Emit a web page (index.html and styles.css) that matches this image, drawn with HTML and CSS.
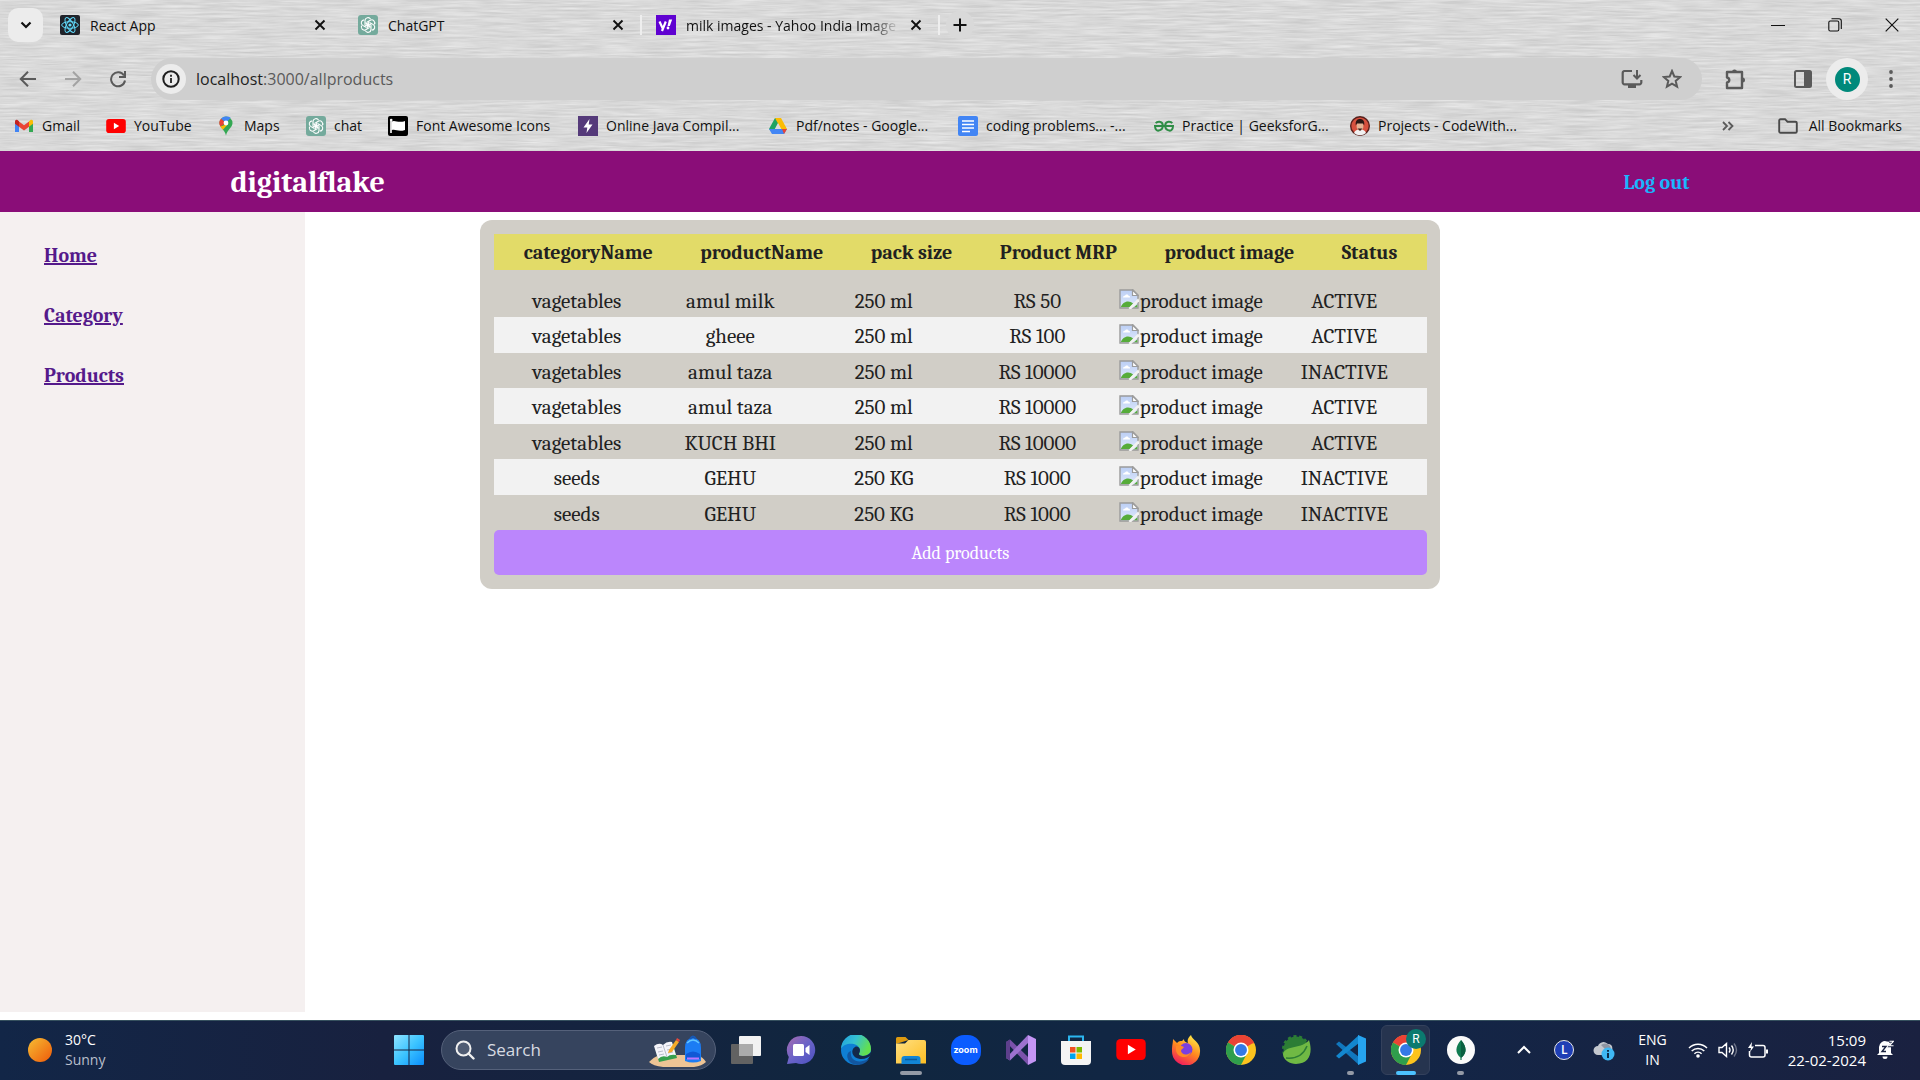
FILE: index.html
```html
<!DOCTYPE html>
<html lang="en">
<head>
<meta charset="utf-8">
<title>React App</title>
<link rel="stylesheet" href="styles.css">
</head>
<body>
<svg width="0" height="0" class="defs" aria-hidden="true">
  <defs>
    <linearGradient id="gWin" x1="0" y1="0" x2="1" y2="1"><stop offset="0" stop-color="#8fe3ff"/><stop offset=".5" stop-color="#3cc4ff"/><stop offset="1" stop-color="#0a8dfc"/></linearGradient>
    <linearGradient id="gSun" x1="0" y1="0" x2="1" y2="1"><stop offset="0" stop-color="#f5bd33"/><stop offset="1" stop-color="#ef5a0a"/></linearGradient>
    <linearGradient id="gSky" x1="0" y1="0" x2="0" y2="1"><stop offset="0" stop-color="#bccff5"/><stop offset="1" stop-color="#dfe9fb"/></linearGradient>
    <linearGradient id="gFolder" x1="0" y1="0" x2="1" y2="1"><stop offset="0" stop-color="#ffe082"/><stop offset="1" stop-color="#fdbd22"/></linearGradient>
    <linearGradient id="gChat" x1="0" y1="0" x2="1" y2="1"><stop offset="0" stop-color="#a86bb0"/><stop offset=".5" stop-color="#6a63c8"/><stop offset="1" stop-color="#4a50c0"/></linearGradient>
    <linearGradient id="gFox" x1=".8" y1="0" x2=".3" y2="1"><stop offset="0" stop-color="#fff04a"/><stop offset=".5" stop-color="#ff8a1e"/><stop offset="1" stop-color="#f0185f"/></linearGradient>
    <linearGradient id="gEdge" x1="0" y1="0" x2="1" y2=".4"><stop offset="0" stop-color="#1e9de0"/><stop offset=".5" stop-color="#35c1d2"/><stop offset="1" stop-color="#62e04f"/></linearGradient>
    <symbol id="gpt" viewBox="0 0 20 20"><rect width="20" height="20" rx="3" fill="#74aa9c"/><g fill="none" stroke="#fff" stroke-width="1.1"><g id="petal"><path d="M7 10V5.6a3 3 0 0 1 5.6-1.4M9 11.4l4.4-2.6"/></g><use href="#petal" transform="rotate(60 10 10)"/><use href="#petal" transform="rotate(120 10 10)"/><use href="#petal" transform="rotate(180 10 10)"/><use href="#petal" transform="rotate(240 10 10)"/><use href="#petal" transform="rotate(300 10 10)"/></g></symbol>
    <symbol id="x" viewBox="0 0 12 12"><path d="M1.5 1.5l9 9M10.500 1.5l-9 9" stroke="#111" stroke-width="1.9" fill="none"/></symbol>
    <symbol id="yt" viewBox="0 0 28 20"><rect width="28" height="20" rx="4" fill="#f00"/><path d="M11 5.500v9l7.500-4.500z" fill="#fff"/></symbol>
    <symbol id="chrome" viewBox="0 0 48 48"><circle cx="24" cy="24" r="24" fill="#fcc31e"/><path d="M24 24L3.200 12A24 24 0 0 1 44.800 12z" fill="#ea4335"/><path d="M24 13h20.800a24 24 0 0 0-41.600-1z" fill="#ea4335"/><path d="M3.200 12A24 24 0 0 0 24 48l9.500-18.500L24 24z" fill="#2f9e4c"/><circle cx="24" cy="24" r="12" fill="#fff"/><circle cx="24" cy="24" r="9.500" fill="#3479e6"/></symbol>
    <symbol id="broken" viewBox="0 0 20 20"><path d="M1 1h13l5 5v13H1z" fill="url(#gSky)"/><path d="M4 8.500c0-1.600 1.500-2 2-1.700.7-2 3.200-1.600 3.500 0 1-.2 1.700.7 1.500 1.700z" fill="#fff"/><path d="M1.800 18.300c1.500-5.500 8-8 12.500-3.500l-3.500 3.500z" fill="#56ac3a"/><path d="M1 1h13l5 5v13H1z" fill="none" stroke="#9b9b9b" stroke-width="1.400"/><path d="M13.500 1v5.500H19z" fill="#fff" stroke="#9b9b9b" stroke-width="1.200"/><path d="M10.500 20L20 10.500" stroke="#f2f2f2" stroke-width="2.600"/><path d="M15 18.300l3.300-3v3z" fill="#56ac3a"/></symbol>
  </defs>
</svg>

<header class="browser">
  <svg class="brushed" aria-hidden="true" width="100%" height="100%">
    <filter id="metal" x="0" y="0" width="100%" height="100%" color-interpolation-filters="sRGB"><feTurbulence type="fractalNoise" baseFrequency="0.025 0.5" numOctaves="3" seed="4"/><feColorMatrix values="0.16 0 0 0 0.77  0.16 0 0 0 0.77  0.16 0 0 0 0.77  0 0 0 0 1"/></filter>
    <rect width="100%" height="100%" filter="url(#metal)"/>
  </svg>
  <div class="tabstrip">
    <button class="tab-search" aria-label="Search tabs"><svg width="12" height="8" viewBox="0 0 12 8"><path d="M1.500 1.500L6 6l4.500-4.500" fill="none" stroke="#111" stroke-width="2.200"/></svg></button>
    <div class="tab">
      <svg width="20" height="20" viewBox="0 0 20 20"><rect width="20" height="20" rx="2" fill="#20232a"/><g fill="none" stroke="#61dafb" stroke-width="1"><ellipse cx="10" cy="10" rx="8.300" ry="3.300"/><ellipse cx="10" cy="10" rx="8.300" ry="3.300" transform="rotate(60 10 10)"/><ellipse cx="10" cy="10" rx="8.300" ry="3.300" transform="rotate(120 10 10)"/></g><circle cx="10" cy="10" r="1.600" fill="#61dafb"/></svg>
      <span class="tab-title">React App</span>
      <button aria-label="Close React App"><svg width="12" height="12"><use href="#x"/></svg></button>
    </div>
    <div class="tab ruled">
      <svg width="20" height="20"><use href="#gpt"/></svg>
      <span class="tab-title">ChatGPT</span>
      <button aria-label="Close ChatGPT"><svg width="12" height="12"><use href="#x"/></svg></button>
    </div>
    <div class="tab ruled">
      <svg width="20" height="20" viewBox="0 0 20 20"><rect width="20" height="20" fill="#5f01d1"/><path d="M3.500 6.500l3 6.500M9.800 6.500L6 16" stroke="#fff" stroke-width="2.200" fill="none"/><path d="M13 4.500h3.200L13.800 11h-2.300z" fill="#fff"/><circle cx="12" cy="13" r="1.400" fill="#fff"/></svg>
      <span class="tab-title faded">milk images - Yahoo India Image</span>
      <button aria-label="Close milk images"><svg width="12" height="12"><use href="#x"/></svg></button>
    </div>
    <button class="new-tab" aria-label="New tab"><svg width="14" height="14" viewBox="0 0 14 14"><path d="M7 0.500v13M.5 7h13" stroke="#111" stroke-width="2"/></svg></button>
    <div class="window-controls">
      <button aria-label="Minimize"><svg width="14" height="14" viewBox="0 0 14 14"><path d="M0 7.500h14" stroke="#111"/></svg></button>
      <button aria-label="Restore"><svg width="14" height="14" viewBox="0 0 14 14"><g fill="none" stroke="#111" stroke-width="1.100"><rect x=".8" y="3" width="10" height="10" rx="1.500"/><path d="M3.500 .8h7.500a2.300 2.300 0 0 1 2.300 2.300v8"/></g></svg></button>
      <button aria-label="Close"><svg width="14" height="14" viewBox="0 0 14 14"><path d="M.7 .7l12.600 12.600M13.300 .7L.7 13.300" stroke="#111" stroke-width="1.200"/></svg></button>
    </div>
  </div>

  <div class="toolbar">
    <div class="nav-buttons">
      <button aria-label="Back"><svg width="18" height="18" viewBox="0 0 18 18"><path d="M17 9H2.500M9 1.800L1.800 9 9 16.200" fill="none" stroke="#5a5a5a" stroke-width="2"/></svg></button>
      <button aria-label="Forward"><svg width="18" height="18" viewBox="0 0 18 18"><path d="M1 9h14.500M9 1.800L16.200 9 9 16.200" fill="none" stroke="#a3a3a3" stroke-width="2"/></svg></button>
      <button aria-label="Reload"><svg width="18" height="18" viewBox="0 0 18 18"><path d="M15 5.500A7 7 0 1 0 16 10.500" fill="none" stroke="#5a5a5a" stroke-width="2"/><path d="M17 1v7h-7V6h5V1z" fill="#5a5a5a"/></svg></button>
    </div>
    <div class="omnibox">
      <button class="site-info" aria-label="View site information"><svg width="18" height="18" viewBox="0 0 18 18"><circle cx="9" cy="9" r="7.700" fill="none" stroke="#1f1f1f" stroke-width="2"/><path d="M9 8v5M9 4.800v1.900" stroke="#1f1f1f" stroke-width="1.800"/></svg></button>
      <span class="url" role="textbox"><b>localhost</b>:3000/allproducts</span>
      <button aria-label="Install app"><svg width="22" height="20" viewBox="0 0 22 20"><path d="M11 2H3.500A2 2 0 0 0 1.700 4v9.500a1.800 1.800 0 0 0 1.800 1.800h15a1.800 1.800 0 0 0 1.800-1.800V11" fill="none" stroke="#5a5a5a" stroke-width="2.200"/><path d="M7 15h8v4H7z" fill="#5a5a5a"/><path d="M16 1v8M12.500 6l3.500 3.500L19.500 6" fill="none" stroke="#5a5a5a" stroke-width="2"/></svg></button>
      <button aria-label="Bookmark this page"><svg width="20" height="20" viewBox="0 0 20 20"><path d="M10 2l2.300 5.500 6 .5-4.600 3.900 1.400 5.800L10 14.600l-5.100 3.100 1.400-5.800L1.700 8l6-.5z" fill="none" stroke="#5a5a5a" stroke-width="2"/></svg></button>
    </div>
    <div class="tools">
      <button aria-label="Extensions"><svg width="22" height="22" viewBox="0 0 22 22"><path d="M3 4h15v16H3v-5.500c3-.5 3-4.500 0-5z" fill="none" stroke="#5a5a5a" stroke-width="2.400" stroke-linejoin="round"/><path d="M8 4a2.500 2.500 0 0 1 5 0zM18.500 9.500a2.500 2.500 0 0 1 0 5z" fill="#5a5a5a"/></svg></button>
      <button aria-label="Side panel"><svg width="18" height="18" viewBox="0 0 18 18"><rect x="1" y="1" width="16" height="16" rx="1.500" fill="none" stroke="#5a5a5a" stroke-width="2"/><path d="M10 1h7v16h-7z" fill="#5a5a5a"/></svg></button>
      <button class="profile" aria-label="Profile"><span>R</span></button>
      <button aria-label="Menu"><svg width="4" height="18" viewBox="0 0 4 18"><g fill="#5a5a5a"><circle cx="2" cy="2" r="1.900"/><circle cx="2" cy="9" r="1.900"/><circle cx="2" cy="16" r="1.900"/></g></svg></button>
    </div>
  </div>

  <nav class="bookmarks" aria-label="Bookmarks">
    <div class="bookmark-list">
      <a href="#"><svg width="20" height="20" viewBox="0 0 20 20"><path d="M1 4.500V16h4V9z" fill="#4285f4"/><path d="M19 4.500V16h-4V9z" fill="#34a853"/><path d="M5 5.500v5.300l5 3.800 5-3.800V5.500l-5 3.800z" fill="#ea4335"/><path d="M1 5.500v2.300l4 3V5.200L3.500 4C2.300 3.100 1 4 1 5.500z" fill="#c5221f"/><path d="M19 5.500v2.300l-4 3V5.200L16.500 4c1.200-.9 2.500 0 2.500 1.500z" fill="#fbbc04"/></svg><span>Gmail</span></a>
      <a href="#"><svg width="20" height="14"><use href="#yt"/></svg><span>YouTube</span></a>
      <a href="#"><svg width="20" height="20" viewBox="0 0 20 20"><path d="M10 .5A6.500 6.500 0 0 0 3.500 7c0 4.500 5 6 6.500 12.500C11.500 13 16.500 11.500 16.500 7A6.500 6.500 0 0 0 10 .5z" fill="#34a853"/><path d="M10 .5A6.500 6.500 0 0 0 5 2.800L10 7l4.700-5.200A6.500 6.500 0 0 0 10 .5z" fill="#4285f4"/><path d="M5 2.800a6.500 6.500 0 0 0-.6 7.700L10 7z" fill="#ea4335"/><path d="M4.400 10.500c.7 1.200 1.600 2.200 2.500 3.200L12 8z" fill="#fbbc04"/><circle cx="10" cy="7" r="2.400" fill="#fff"/></svg><span>Maps</span></a>
      <a href="#"><svg width="20" height="20"><use href="#gpt"/></svg><span>chat</span></a>
      <a href="#"><svg width="20" height="20" viewBox="0 0 20 20"><rect width="20" height="20" rx="2" fill="#000"/><path d="M3 4.500v12.500" stroke="#fff" stroke-width="1.600"/><path d="M3.500 5.500c4-2 6 2 13.500-.5v9c-7 2.500-9.500-1.500-13.500.3z" fill="#fff"/><circle cx="3.200" cy="4" r="1.300" fill="#fff"/></svg><span>Font Awesome Icons</span></a>
      <a href="#"><svg width="20" height="20" viewBox="0 0 20 20"><rect width="20" height="20" fill="#553a7a"/><path d="M11.500 3L5.500 11.500h3.800L8.500 17l6-8.500h-3.800z" fill="#fff"/></svg><span>Online Java Compil...</span></a>
      <a href="#"><svg width="20" height="20" viewBox="0 0 20 20"><path d="M7 2h6l-7.500 15.500L1 13z" fill="#1ea362"/><path d="M7 2h6l6 11h-6z" fill="#fbbc04"/><path d="M1 13h18l-3 5H4z" fill="#4285f4"/><path d="M14 13h5l-3 5z" fill="#ea4335"/><path d="M10 7l3.200 6H6.800z" fill="#dcdcdc"/></svg><span>Pdf/notes - Google...</span></a>
      <a href="#"><svg width="20" height="20" viewBox="0 0 20 20"><rect width="20" height="20" rx="2" fill="#4285f4"/><path d="M4 5h12M4 8.500h12M4 12h12M4 15.500h8" stroke="#fff" stroke-width="1.700"/></svg><span>coding problems... -...</span></a>
      <a href="#"><svg width="20" height="20" viewBox="0 0 20 20"><g fill="none" stroke="#2f8d46" stroke-width="2"><path d="M1.800 7.300C3 5.200 8.300 4.500 8.800 9.200 9 14 4.500 15.500 2.500 14 1 12.800 1 11.500 1 10h18c0 1.500 0 2.800-1.500 4-2 1.500-6.500 0-6.300-4.800C11.700 4.500 17 5.200 18.200 7.300"/></g></svg><span>Practice | GeeksforG...</span></a>
      <a href="#"><svg width="20" height="20" viewBox="0 0 20 20"><circle cx="10" cy="10" r="9.300" fill="#d6503e" stroke="#57201c" stroke-width="1.400"/><path d="M4 17c1-3 3-3.500 6-3.500s5 .5 6 3.500a9 9 0 0 1-12 0z" fill="#f1f1f1"/><ellipse cx="10" cy="10" rx="3.400" ry="4.500" fill="#e5b294"/><path d="M5.800 9.500C5 4 8 3 10 3s5 1 4.200 6.500L13 7.500H7z" fill="#2a1715"/><path d="M7.500 12.500h5L10 15z" fill="#3a2320"/></svg><span>Projects - CodeWith...</span></a>
    </div>
    <button class="more-bookmarks" aria-label="More bookmarks"><svg width="12" height="10" viewBox="0 0 12 10"><path d="M1 1l4 4-4 4M6.500 1l4 4-4 4" fill="none" stroke="#5a5a5a" stroke-width="1.800"/></svg></button>
    <a href="#"><svg width="20" height="20" viewBox="0 0 20 20"><path d="M1.200 4.500a1.300 1.300 0 0 1 1.300-1.300H7l2.500 2.500h8a1.300 1.300 0 0 1 1.300 1.300v8.500a1.300 1.300 0 0 1-1.300 1.300h-15a1.300 1.300 0 0 1-1.300-1.300z" fill="none" stroke="#4a4a4a" stroke-width="1.900"/></svg><span>All Bookmarks</span></a>
  </nav>
</header>

<div class="app">
  <header class="navbar">
    <h1>digitalflake</h1>
    <a href="#">Log out</a>
  </header>
  <div class="content">
    <nav class="sidebar">
      <a href="#">Home</a>
      <a href="#">Category</a>
      <a href="#">Products</a>
    </nav>
    <main>
      <section class="panel">
        <table>
          <thead><tr><th>categoryName</th><th>productName</th><th>pack size</th><th>Product MRP</th><th>product image</th><th>Status</th></tr></thead>
          <tbody>
            <tr><td>vagetables</td><td>amul milk</td><td>250 ml</td><td>RS 50</td><td class="pic"><svg width="20" height="20"><use href="#broken"/></svg>product image</td><td>ACTIVE</td></tr>
            <tr><td>vagetables</td><td>gheee</td><td>250 ml</td><td>RS 100</td><td class="pic"><svg width="20" height="20"><use href="#broken"/></svg>product image</td><td>ACTIVE</td></tr>
            <tr><td>vagetables</td><td>amul taza</td><td>250 ml</td><td>RS 10000</td><td class="pic"><svg width="20" height="20"><use href="#broken"/></svg>product image</td><td>INACTIVE</td></tr>
            <tr><td>vagetables</td><td>amul taza</td><td>250 ml</td><td>RS 10000</td><td class="pic"><svg width="20" height="20"><use href="#broken"/></svg>product image</td><td>ACTIVE</td></tr>
            <tr><td>vagetables</td><td>KUCH BHI</td><td>250 ml</td><td>RS 10000</td><td class="pic"><svg width="20" height="20"><use href="#broken"/></svg>product image</td><td>ACTIVE</td></tr>
            <tr><td>seeds</td><td>GEHU</td><td>250 KG</td><td>RS 1000</td><td class="pic"><svg width="20" height="20"><use href="#broken"/></svg>product image</td><td>INACTIVE</td></tr>
            <tr><td>seeds</td><td>GEHU</td><td>250 KG</td><td>RS 1000</td><td class="pic"><svg width="20" height="20"><use href="#broken"/></svg>product image</td><td>INACTIVE</td></tr>
          </tbody>
        </table>
        <button class="add">Add products</button>
      </section>
    </main>
  </div>
</div>

<footer class="taskbar">
  <div class="weather">
    <svg width="24" height="24" viewBox="0 0 24 24"><circle cx="12" cy="12" r="12" fill="url(#gSun)"/></svg>
    <div><div>30°C</div><div class="dim">Sunny</div></div>
  </div>
  <button class="start" aria-label="Start"><svg width="30" height="30" viewBox="0 0 30 30"><path d="M0 1a1 1 0 0 1 1-1h13.500v14.500H0zM15.500 0H29a1 1 0 0 1 1 1v13.500H15.500zM0 15.500h14.500V30H1a1 1 0 0 1-1-1zM15.500 15.500H30V29a1 1 0 0 1-1 1H15.500z" fill="url(#gWin)"/></svg></button>
  <button class="search">
    <svg width="20" height="20" viewBox="0 0 20 20"><circle cx="8.500" cy="8.500" r="7" fill="#ffffff22" stroke="#f0f0f0" stroke-width="2"/><path d="M13.500 13.500l5 5" stroke="#f0f0f0" stroke-width="2.400" stroke-linecap="round"/></svg>
    <span>Search</span>
    <svg width="58" height="34" viewBox="0 0 58 34"><path d="M0 29q5-5 10-7h38q6 2 9 7-4 4-12 5H14Q4 33 0 29z" fill="#edc495"/><path d="M6 15l18-4 4 14-18 4z" fill="#35a04d"/><path d="M5 13q5-4 9-1 4-4 9-3l4 13q-6-1-9 2-5-2-9 2z" fill="#f4f4fa"/><path d="M14 12l4 12M8 15l5-1M9 19l5-1M10 22l5-1M17 13l5-1M18 17l5-1M19 20l5-1" stroke="#b9bccb"/><path d="M20 17l7-10 3 2-7 10-4 1z" fill="#f5aa28"/><path d="M27 7l1-2 3 2-1 2z" fill="#e8493c"/><path d="M36 28V15q0-10 8-10t8 10v13q-8 3-16 0z" fill="#1c7cf4"/><path d="M41 6q3-5 6 0" fill="none" stroke="#1559b8" stroke-width="2"/><path d="M38 10q6-6 12 0" fill="none" stroke="#62c6ff" stroke-width="1.500"/><path d="M37 26v-5q7-5 14 0v5z" fill="#1058d6"/><path d="M38 25.500h12" stroke="#bb76ff" stroke-width="2"/></svg>
  </button>
  <div class="apps">
    <button aria-label="Task view"><svg width="30" height="30" viewBox="0 0 30 30"><rect x="0" y="9" width="22" height="20" rx="1" fill="#626262"/><rect x="8" y="1" width="22" height="20" rx="1" fill="#f2f2f2"/><path d="M8 9h14v12H8z" fill="#ababab"/></svg></button>
    <button aria-label="Chat"><svg width="30" height="30" viewBox="0 0 30 30"><path d="M15 1a14 14 0 1 1-5 27l-9 1 1.800-7A14 14 0 0 1 15 1z" fill="url(#gChat)"/><rect x="7" y="9" width="11" height="12" rx="1.500" fill="#fff"/><path d="M19.500 13l4-3v10l-4-3z" fill="#fff"/></svg></button>
    <button aria-label="Edge"><svg width="30" height="30" viewBox="0 0 30 30"><circle cx="15" cy="15" r="15" fill="#0f7fd4"/><path d="M0 14A15 15 0 0 1 30 14c0 7-9 8-11.500 6-1.500-1.500 1-2 .3-6C17 7 3 7 0 14z" fill="url(#gEdge)"/><path d="M10 16c-1.500 8 5 14 18 8-5 7-13 7-18 4-5-4-5-11 0-12z" fill="#1256a0"/><path d="M14 12c-5 3-3 11 5 12 5 .5 9-2 11-4v-3c-3 4-9 5-11.500 3-1.500-1.500 1-2 .3-6-.8-2-2.800-3-4.800-2z" fill="#13294a"/></svg></button>
    <button aria-label="File Explorer" class="running wide"><svg width="30" height="30" viewBox="0 0 30 30"><path d="M0 3.500A1.500 1.500 0 0 1 1.500 2h8L13 5.500h-2L0 9z" fill="#dd9a10"/><path d="M0 8.500h9L12.500 5H28a2 2 0 0 1 2 2v21.500H0z" fill="url(#gFolder)"/><path d="M5.500 29v-5a3 3 0 0 1 3-3h13a3 3 0 0 1 3 3v5z" fill="#1285d6"/><path d="M9 24.500h12" stroke="#0b5b9c" stroke-width="1.500"/></svg></button>
    <button aria-label="Zoom"><span class="zoom-logo">zoom</span></button>
    <button aria-label="Visual Studio"><svg width="30" height="30" viewBox="0 0 30 30"><path d="M0 7l4-2.500L22 22v8z" fill="#7b52ab"/><path d="M0 23l4 2.500L22 8V0z" fill="#9d72cf"/><path d="M0 7l4-2.500V25.500L0 23z" fill="#5d3f8c"/><path d="M22 0l8 4v22l-8 4z" fill="#c495f5"/></svg></button>
    <button aria-label="Microsoft Store"><svg width="30" height="30" viewBox="0 0 30 30"><path d="M8 7V1.500h14V7" fill="none" stroke="#2bb6ef" stroke-width="2"/><path d="M0 6h30v20a4 4 0 0 1-4 4H4a4 4 0 0 1-4-4z" fill="#f4f4f4"/><path d="M9 12h5.500v5.500H9z" fill="#f25022"/><path d="M15.500 12H21v5.500h-5.500z" fill="#7fba00"/><path d="M9 18.500h5.500V24H9z" fill="#00a4ef"/><path d="M15.500 18.500H21V24h-5.500z" fill="#ffb900"/></svg></button>
    <button aria-label="YouTube"><svg width="30" height="21"><use href="#yt"/></svg></button>
    <button aria-label="Firefox"><svg width="30" height="30" viewBox="0 0 30 30"><path d="M2 4l4 4c2-2 3-2 5-2 0 0 1-1 2-2 0 3 2 3 4 4-1-3 0-5 3-8 1 5 10 7 9 17A14 14 0 0 1 1 16C1 10 2 8 2 4z" fill="url(#gFox)"/><circle cx="15" cy="14.500" r="6.500" fill="#7a3fe0"/><path d="M5 11c3-2 6 0 8 1-1 2-3 2-3 4 1 4 6 5 10 1-2 7-14 7-15-2z" fill="#ff8a26"/></svg></button>
    <button aria-label="Chrome"><svg width="30" height="30"><use href="#chrome"/></svg></button>
    <button aria-label="Spring Tools"><svg width="30" height="30" viewBox="0 0 30 30"><circle cx="15" cy="14" r="12.500" fill="#2c7d35" stroke="#2c7d35" stroke-width="3" stroke-dasharray="3 2.600"/><path d="M28 5c4 12 1 24-13 24C9 29 2 25 2 19 4 10 22 14 28 5z" fill="#70b944"/><path d="M5 23c10 1 17-2 21-12" fill="none" stroke="#2c7d35" stroke-width="1.500"/></svg></button>
    <button aria-label="Visual Studio Code" class="running"><svg width="30" height="30" viewBox="0 0 30 30"><path d="M0 9l3-2.500L23 22v8z" fill="#1177bd"/><path d="M0 21l3 2.500L23 8V0z" fill="#1387cf"/><path d="M22 0l8 3.500v23L22 30z" fill="#26a4f0"/></svg></button>
    <button aria-label="Chrome, profile R" class="running active"><svg width="30" height="30"><use href="#chrome"/></svg><span class="badge">R</span></button>
    <button aria-label="MongoDB Compass" class="running"><svg width="28" height="28" viewBox="0 0 28 28"><circle cx="14" cy="14" r="14" fill="#fafafa"/><path d="M14 4c6 7 6 13 .6 17.500V24h-1.200v-2.500C8 17 8 11 14 4z" fill="#0f7a50"/><path d="M14 4c6 7 6 13 .6 17.500H14z" fill="#0a5f40"/></svg></button>
  </div>
  <div class="tray">
    <button aria-label="Show hidden icons"><svg width="14" height="9" viewBox="0 0 14 9"><path d="M1 8l6-6 6 6" fill="none" stroke="#fff" stroke-width="2"/></svg></button>
    <span class="letter">L</span>
    <svg width="22" height="22" viewBox="0 0 22 22"><path d="M5 16a4.500 4.500 0 0 1 0-9 6 6 0 0 1 10-2c4 0 5 3 4 7l-4 4z" fill="#c3c7ce"/><path d="M8 6a6 6 0 0 1 10 4l-5 1z" fill="#8e95a3"/><circle cx="15" cy="15" r="6.500" fill="#3fb8f4"/><path d="M15 14v5M15 11v1.800" stroke="#0c2d4a" stroke-width="2"/></svg>
    <div class="lang"><div>ENG</div><div>IN</div></div>
    <div class="status">
      <svg width="20" height="16" viewBox="0 0 20 16"><g fill="none" stroke="#fff" stroke-width="1.500"><path d="M1 6a12.700 12.700 0 0 1 18 0M3.700 9a9 9 0 0 1 12.600 0M6.400 11.800a5.200 5.200 0 0 1 7.200 0"/></g><circle cx="10" cy="14" r="1.800" fill="#fff"/></svg>
      <svg width="20" height="16" viewBox="0 0 20 16"><g fill="none" stroke="#fff" stroke-width="1.400"><path d="M1 5.500h3L8.500 1.500v13L4 10.500H1zM11 5.500q2 2.500 0 5M13.500 3.500q3.500 4.500 0 9"/><path d="M16 1.500q5 6.500 0 13" stroke="#6e7488"/></g></svg>
      <svg width="20" height="16" viewBox="0 0 20 16"><path d="M7 3.500h8a2 2 0 0 1 2 2V13a2 2 0 0 1-2 2H3.500a2 2 0 0 1-2-2V9" fill="none" stroke="#fff" stroke-width="1.500"/><path d="M18 7.500h2v4h-2zM4 0L0 6h3l-1 4 4-5.500H3.500z" fill="#fff"/></svg>
    </div>
    <div class="clock"><div>15:09</div><div>22-02-2024</div></div>
    <svg width="17" height="19" viewBox="0 0 17 19"><path d="M2 13V7a6 6 0 0 1 8-5.500l4 .5v11l2 2H0z" fill="#fff"/><path d="M5.500 16.500h5a2.500 2.500 0 0 1-5 0z" fill="#fff"/><path d="M5 6.500h4l-4 5h4M12 2h4l-4 4.500h4" fill="none" stroke="#1a2340" stroke-width="1.400"/><path d="M12.500 1.200h4l-4 4.500h4" fill="none" stroke="#fff" stroke-width="1.100"/></svg>
  </div>
</footer>
</body>
</html>
```
FILE: styles.css
```css
* { box-sizing: border-box; }

body {
  margin: 0;
  min-height: 100vh;
  display: flex;
  flex-direction: column;
  background: #fff;
  font-family: "Segoe UI", "Open Sans", "Noto Sans", sans-serif;
}

.defs { position: absolute; }

svg { display: block; flex: none; }

button {
  display: flex;
  align-items: center;
  justify-content: center;
  padding: 0;
  border: 0;
  background: none;
  font: inherit;
  color: inherit;
}

/* Browser window frame */
.browser {
  position: relative;
  isolation: isolate;
  display: flex;
  flex-direction: column;
  font-size: 14px;
  color: #111;
  background: #d9d9d9;
}

.brushed { position: absolute; inset: 0; z-index: -1; }

.tabstrip { display: flex; align-items: center; height: 50px; padding-left: 8px; }

.tab-search { width: 35px; height: 34px; margin-right: 3px; border-radius: 10px; background: #ececec; }

.tab { display: flex; align-items: center; gap: 10px; width: 298px; height: 20px; padding: 0 16px 0 14px; border-right: 2px solid transparent; }
.tab.ruled { border-right-color: #eee; }
.tab-title { flex: 1; overflow: hidden; white-space: nowrap; }
.tab-title.faded { -webkit-mask-image: linear-gradient(90deg, #000 85%, transparent); mask-image: linear-gradient(90deg, #000 85%, transparent); }

.new-tab { width: 28px; height: 28px; margin-left: 6px; border-radius: 14px; background: #d9d9d9; }

.window-controls { display: flex; margin-left: auto; }
.window-controls button { width: 57px; height: 40px; }

.toolbar { display: flex; align-items: center; height: 58px; }

.nav-buttons { display: flex; width: 151px; padding-left: 5px; }
.nav-buttons button { width: 45px; height: 40px; }

.omnibox { display: flex; flex: 1; align-items: center; height: 42px; padding: 0 10px 0 5px; border-radius: 21px; background: #cfcfcf; }
.omnibox button { width: 40px; height: 40px; }
.omnibox .site-info { width: 30px; height: 30px; margin-right: 10px; border-radius: 15px; background: #ececec; }

.url { flex: 1; font-size: 16px; color: #5a5a5a; }
.url b { font-weight: 400; color: #1f1f1f; }

.tools { display: flex; align-items: center; padding: 0 6px 0 10px; }
.tools button { width: 46px; height: 42px; }
.tools button:first-child { margin-right: 22px; }
.tools .profile { width: 42px; border-radius: 21px; background: #ececec; }
.profile span { width: 25px; height: 25px; border-radius: 13px; background: #00897b; color: #fff; font: 14px/25px Roboto, sans-serif; }

.bookmarks { display: flex; align-items: center; height: 43px; padding: 0 18px 8px 14px; white-space: nowrap; }
.bookmarks a { display: flex; align-items: center; gap: 8px; color: #111; text-decoration: none; }
.bookmark-list { display: grid; grid-template-columns: 92px 110px 90px 82px 190px 190px 190px 196px 196px 172px; }
.more-bookmarks { width: 20px; height: 20px; margin: 0 40px 0 auto; }
.more-bookmarks + a { gap: 11px; }

/* Web app */
.app { display: flex; flex: 1; flex-direction: column; padding-bottom: 8px; font-family: Cambria, Caladea, "Noto Serif", "Liberation Serif", serif; color: #212121; }

.navbar { display: flex; align-items: center; justify-content: space-between; height: 61px; padding: 2px 12% 0; background: #8a0d78; }
.navbar h1 { margin: 0; font-size: 30px; color: #fff; }
.navbar a { font-size: 20px; font-weight: 700; color: #19b5fe; text-decoration: none; }

.content { display: flex; flex: 1; }

.sidebar { display: flex; flex-direction: column; align-items: flex-start; gap: 36px; width: 305px; padding: 32px 44px; background: #f5f0f0; }
.sidebar a { font-size: 20px; line-height: 24px; font-weight: 700; color: #551a8b; }

main { flex: 1; padding: 8px 25% 8px 175px; }

.panel { padding: 14px 13px 14px 14px; border-radius: 12px; background: #d1cec7; }

table { display: block; width: 100%; font-size: 21px; line-height: 24px; }
thead, tbody { display: block; }
thead { margin-bottom: 12px; font-size: 20px; }
thead tr { display: flex; justify-content: space-around; height: 36px; padding: 0 6px; background: #e2db68; }
tbody tr { display: grid; grid-template-columns: repeat(6, 1fr); height: 36px; padding: 0 6px; }
tbody tr:nth-child(even) { background: #f2f2f2; }
tbody tr:nth-child(odd) { height: 35px; }
th, td { padding: 7px 0 0; text-align: center; white-space: nowrap; }
.pic { display: flex; justify-content: center; gap: 1px; }

.add { width: 100%; height: 45px; padding-top: 2px; border-radius: 5px; background: #bb86fc; color: #fff; font-size: 18px; }

/* Desktop taskbar */
.taskbar { display: flex; align-items: center; height: 60px; padding-bottom: 2px; border-top: 1px solid #35505e; color: #fff; font-size: 14px; line-height: 20px; background: linear-gradient(90deg, #122647, #18213f 20%, #10263f 45%, #122647 70%, #1a2140); }

.weather { display: flex; align-items: center; gap: 13px; width: 380px; padding-left: 28px; }
.dim { color: #b9bfcc; }

.start { width: 58px; height: 57px; margin-right: 3px; }

.search { width: 275px; height: 40px; padding: 0 8px 0 13px; border: 1px solid #55617a; border-radius: 20px; background: #36445e; color: #d8dbe2; font-size: 17px; }
.search span { flex: 1; padding-left: 12px; text-align: left; }

.apps { display: flex; padding-left: 2px; }
.apps button { position: relative; width: 55px; height: 50px; }
.apps .active::before { content: ""; position: absolute; inset: 0 3px; z-index: 0; border: 1px solid #34415c; border-radius: 6px; background: #26344f; }
.apps .active svg { position: relative; }
.apps .running::after { content: ""; position: absolute; bottom: 0; width: 7px; height: 4px; border-radius: 2px; background: #949aa6; }
.apps .wide::after { width: 22px; }
.apps .active::after { width: 20px; background: #4cc2ff; }
.zoom-logo { width: 30px; height: 30px; border-radius: 13px; background: #0b5cff; font: 700 9px/29px Inter, sans-serif; }
.badge { position: absolute; top: 4px; right: 7px; width: 20px; height: 20px; border-radius: 10px; background: #0b7a6f; font: 12px/20px Roboto, sans-serif; }

.tray { display: flex; align-items: center; margin-left: auto; padding-right: 26px; }
.letter { width: 20px; height: 20px; margin: 0 19px 0 23px; border: 1px solid #e8e8e8; border-radius: 10px; background: #1f3fb5; text-align: center; font-size: 12px; line-height: 18px; font-weight: 600; }
.lang { margin: 0 21px 0 23px; text-align: center; }
.status { display: flex; gap: 10px; }
.clock { margin: 0 11px 0 20px; text-align: right; font-size: 15px; }
```
